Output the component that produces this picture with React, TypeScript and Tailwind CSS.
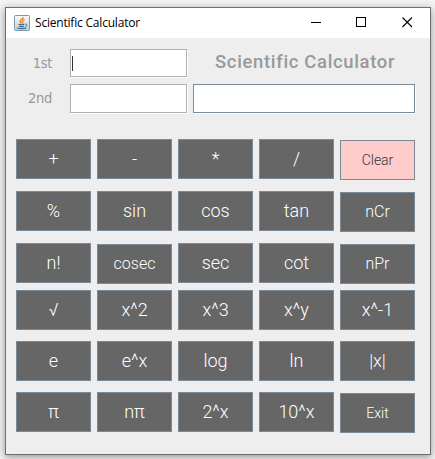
type Key = { label: string; face?: string; low?: boolean };

const base = "bg-[#666666] text-white text-[18px]";

const rows: { gap: string; keys: Key[] }[] = [
  {
    gap: "mb-[12px]",
    keys: [
      { label: "+" },
      { label: "-" },
      { label: "*" },
      { label: "/" },
      { label: "Clear", face: "bg-[#ffcccc] text-[#333333] text-[14px]", low: true },
    ],
  },
  {
    gap: "mb-[12px]",
    keys: [
      { label: "%" },
      { label: "sin" },
      { label: "cos" },
      { label: "tan" },
      { label: "nCr", face: "bg-[#666666] text-white text-[16px]", low: true },
    ],
  },
  {
    gap: "mb-[7px]",
    keys: [
      { label: "n!" },
      { label: "cosec", face: "bg-[#666666] text-white text-[16px]", low: true },
      { label: "sec" },
      { label: "cot" },
      { label: "nPr", face: "bg-[#666666] text-white text-[16px]", low: true },
    ],
  },
  {
    gap: "mb-[11px]",
    keys: [{ label: "√" }, { label: "x^2" }, { label: "x^3" }, { label: "x^y" }, { label: "x^-1" }],
  },
  {
    gap: "mb-[11px]",
    keys: [{ label: "e" }, { label: "e^x" }, { label: "log" }, { label: "ln" }, { label: "|x|" }],
  },
  {
    gap: "",
    keys: [
      { label: "π" },
      { label: "nπ" },
      { label: "2^x" },
      { label: "10^x" },
      { label: "Exit", face: "bg-[#666666] text-white text-[14px]", low: true },
    ],
  },
];

function JavaIcon() {
  return (
    <svg width="16" height="16" viewBox="0 0 16 16" fill="none">
      <defs>
        <linearGradient id="tile" x1="0" y1="0" x2="0" y2="1">
          <stop offset="0" stopColor="#f8fafb" />
          <stop offset="1" stopColor="#c5d0d8" />
        </linearGradient>
      </defs>
      <rect x="0.5" y="0.5" width="15" height="15" rx="1" fill="url(#tile)" stroke="#7d98aa" />
      <path d="M9 2.2C9.4 4 6 4.8 6.2 6.4C6.3 7.3 7.3 7.7 7.5 8.6" stroke="#ee8322" strokeWidth="1.5" />
      <path d="M10.6 4.6C8.8 5.3 8 6 8.8 7C9.2 7.6 9 8 8.5 8.5" stroke="#ee8322" strokeWidth="1.2" />
      <path d="M4.4 9.2C5.5 9.9 9.2 9.8 10.3 9.2M5 11.2C6.5 11.8 8.6 11.8 10 11.2M3.2 12.4C2.5 13.8 11 14.1 12.4 12.8" stroke="#41708f" strokeWidth="1.2" />
      <path d="M11 9.2C13.8 8.6 13.4 11 11.2 11.4" stroke="#41708f" />
    </svg>
  );
}

export default function App() {
  return (
    <div className="h-[459px] w-[435px] overflow-hidden bg-[#f3f3f3] pl-[5px] pt-[7px]">
      <div className="h-[448px] w-[426px] border border-[#6e6e6e] bg-[#eeeeee] shadow-[0_2px_8px_rgba(0,0,0,0.4)]">
        <header className="flex h-[30px] items-center bg-white pl-[8px]">
          <JavaIcon />
          <span className="ml-[5px] whitespace-nowrap font-['Open_Sans',sans-serif] text-[12px] leading-[16px] tracking-[-0.2px] text-black">
            Scientific Calculator
          </span>
          <svg className="ml-auto mr-[16px]" width="103" height="12" viewBox="0 0 103 12" fill="none" stroke="#000" shapeRendering="crispEdges">
            <path d="M0 5.5H10" />
            <rect x="45.5" y="0.5" width="9" height="9" />
            <path d="M91.5 0.5L101 10M101 0.5L91.5 10" shapeRendering="auto" strokeWidth="1.1" />
          </svg>
        </header>

        <main className="pl-[10px] pt-[11px]">
          <div className="flex h-[35px] items-start">
            <label className="w-[36px] pt-[4px] text-right font-['DejaVu_Sans_Condensed','DejaVu_Sans',sans-serif] text-[14.5px] leading-[20px] tracking-[-0.3px] text-[#999999]">
              1st
            </label>
            <div className="ml-[18px] h-[28px] w-[117px] border border-[#b0b0b0] bg-white pl-px pt-[6px] shadow-[1px_1px_0_#fff]">
              <div className="h-[15px] w-px bg-[#333333]" />
            </div>
            <h1 className="ml-[28px] origin-left scale-x-[0.97] whitespace-nowrap font-['Roboto',sans-serif] text-[19px] font-medium leading-[26px] tracking-[0.7px] text-[#999999]">
              Scientific Calculator
            </h1>
          </div>
          <div className="flex h-[55px] items-start">
            <label className="w-[36px] pt-[4px] text-right font-['DejaVu_Sans_Condensed','DejaVu_Sans',sans-serif] text-[14.5px] leading-[20px] tracking-[-0.3px] text-[#999999]">
              2nd
            </label>
            <div className="ml-[18px] h-[29px] w-[117px] border border-[#b0b0b0] bg-white shadow-[1px_1px_0_#fff]" />
            <div className="ml-[6px] h-[29px] w-[222px] border border-[#7a8a99] bg-white shadow-[1px_1px_0_#fff]" />
          </div>

          {rows.map((row, i) => (
            <div key={i} className={`flex h-[40px] gap-[6px] ${row.gap}`}>
              {row.keys.map((key) => (
                <button
                  key={key.label}
                  className={`flex h-[40px] w-[75px] shrink-0 items-center justify-center border border-[#7a8a99] font-['Roboto',sans-serif] font-light leading-none ${key.face ?? base} ${key.low ? "mt-px" : ""}`}
                >
                  {key.label}
                </button>
              ))}
            </div>
          ))}
        </main>
      </div>
    </div>
  );
}
